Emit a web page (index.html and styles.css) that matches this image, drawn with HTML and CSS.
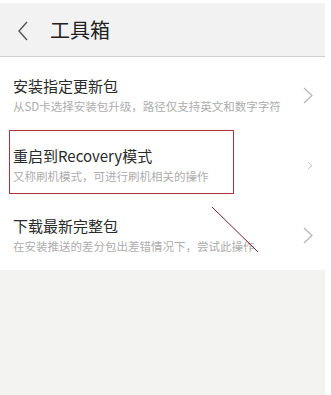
FILE: index.html
```html
<!DOCTYPE html>
<html lang="zh-CN">
<head>
<meta charset="UTF-8">
<meta name="viewport" content="width=device-width, initial-scale=1.0">
<title>工具箱</title>
<link rel="stylesheet" href="styles.css">
</head>
<body>
<div class="page">
    <div class="header">
        <svg class="back" width="12" height="20" viewBox="0 0 12 20">
            <polyline points="10,1 2,10 10,19" fill="none" stroke="#555" stroke-width="1.4"/>
        </svg>
        <div class="header-title">工具箱</div>
    </div>
    <div class="list">
        <div class="item">
            <div class="text">
                <div class="item-title">安装指定更新包</div>
                <div class="item-desc">从SD卡选择安装包升级，路径仅支持英文和数字字符</div>
            </div>
            <svg class="arrow" width="10" height="17" viewBox="0 0 10 17">
                <polyline points="1,1 9,8.5 1,16" fill="none" stroke="#b5b5b5" stroke-width="1.2"/>
            </svg>
        </div>
        <div class="item">
            <div class="text">
                <div class="item-title">重启到Recovery模式</div>
                <div class="item-desc">又称刷机模式，可进行刷机相关的操作</div>
            </div>
            <svg class="arrow small" width="6" height="9" viewBox="0 0 6 9">
                <polyline points="1,1 5,4.5 1,8" fill="none" stroke="#c4c4c4" stroke-width="1"/>
            </svg>
        </div>
        <div class="item">
            <div class="text">
                <div class="item-title">下载最新完整包</div>
                <div class="item-desc">在安装推送的差分包出差错情况下，尝试此操作</div>
            </div>
            <svg class="arrow" width="10" height="17" viewBox="0 0 10 17">
                <polyline points="1,1 9,8.5 1,16" fill="none" stroke="#b5b5b5" stroke-width="1.2"/>
            </svg>
        </div>
    </div>
    <div class="filler"></div>

    <div class="mark-box"></div>
    <svg class="mark-line" width="331" height="395" viewBox="0 0 331 395">
        <line x1="212" y1="207" x2="258" y2="252" stroke="#7a1f2e" stroke-width="1"/>
    </svg>
</div>
</body>
</html>
```

FILE: styles.css
```css
body {
    margin: 0;
    background: #fff;
    font-family: "Noto Sans CJK SC", "Noto Sans", sans-serif;
}

.page {
    position: relative;
    width: 325px;
    height: 395px;
    padding-top: 3px;
    box-sizing: border-box;
    display: flex;
    flex-direction: column;
}

.header {
    height: 54px;
    background: #f2f2f2;
    border-bottom: 1px solid #cfcfcf;
    display: flex;
    align-items: center;
    box-sizing: border-box;
}

.back {
    margin-left: 17px;
    margin-top: 2px;
}

.header-title {
    margin-left: 21px;
    font-size: 20px;
    color: #222;
    line-height: 24px;
}

.list {
    background: #fff;
    padding-top: 3px;
}

.item {
    height: 70px;
    display: flex;
    align-items: center;
    padding: 0 12px 0 13px;
}

.text {
    flex: 1;
}

.item-title {
    font-size: 15px;
    line-height: 20px;
    color: #2a2a2a;
}

.item-desc {
    margin-top: 2px;
    font-size: 11.5px;
    line-height: 16px;
    color: #adadad;
    white-space: nowrap;
}

.arrow {
    margin-left: 8px;
}

.arrow.small {
    margin-right: 0;
}

.filler {
    flex: 1;
    background: #f3f3f1;
}

.mark-box {
    position: absolute;
    left: 9px;
    top: 130px;
    width: 225px;
    height: 64px;
    border: 1.5px solid #b0303c;
    box-sizing: border-box;
}

.mark-line {
    position: absolute;
    left: 0;
    top: 0;
}
```
